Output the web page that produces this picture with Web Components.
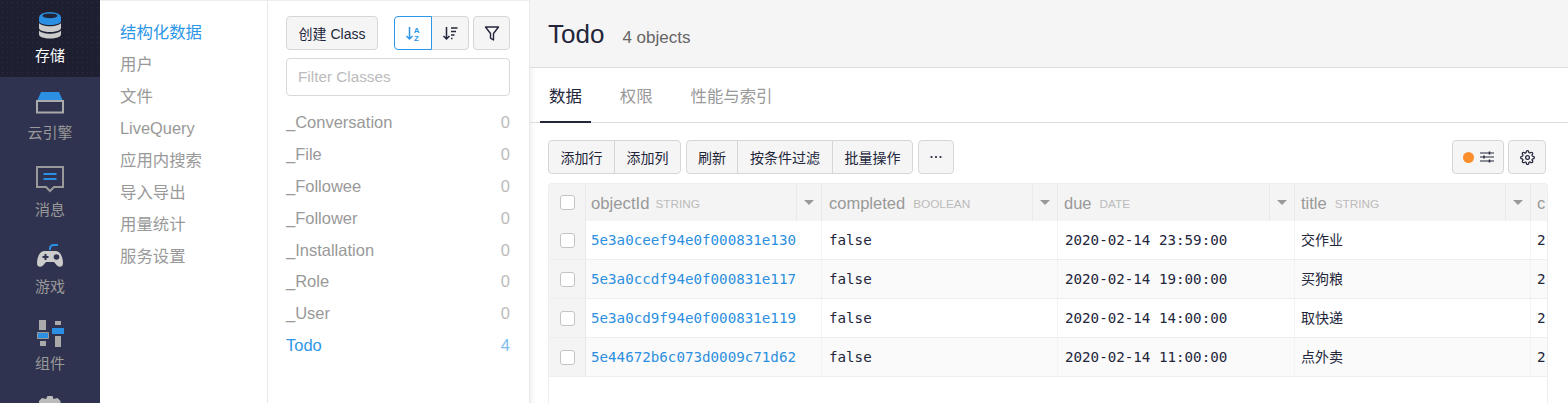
<!DOCTYPE html>
<html lang="zh">
<head>
<meta charset="utf-8">
<title>Todo</title>
<style>
  html, body { margin: 0; height: 100%; overflow: hidden; background: #fff; }
  body { font-family: "Liberation Sans", "Noto Sans CJK SC", sans-serif; color: #23263b; }
  .app { display: flex; height: 403px; overflow: hidden; }
</style>
</head>
<body>
<div class="app">
  <nav-rail>
    <rail-item active label="存储">
      <svg viewBox="0 0 28 28" width="28" height="28">
        <path d="M3 12v5c0 2.400 5 4 11 4s11-1.600 11-4v-5c-1.500 2-6 3.200-11 3.200S4.500 14 3 12z" fill="#ccc"/>
        <path d="M3 19.500v4c0 2.400 5 4 11 4s11-1.600 11-4v-4c-1.500 2-6 3.200-11 3.200S4.500 21.500 3 19.500z" fill="#ccc"/>
        <ellipse cx="14" cy="6.500" rx="11" ry="5.500" fill="#2b8fe3"/>
        <path d="M3 6.500v3.500c0 2.400 5 4 11 4s11-1.600 11-4V6.500c-1.500 2-6 3.200-11 3.200S4.500 8.500 3 6.500z" fill="#2b8fe3"/>
        <ellipse cx="14" cy="4.800" rx="7.500" ry="2.400" fill="#23263b"/>
      </svg>
    </rail-item>
    <rail-item label="云引擎">
      <svg viewBox="0 0 28 28" width="28" height="28">
        <path d="M5 4h18l4 9H1z" fill="#2b8fe3"/>
        <path d="M1 13h26v11.500H1z" fill="none" stroke="#aaa" stroke-width="2"/>
      </svg>
    </rail-item>
    <rail-item label="消息">
      <svg viewBox="0 0 28 28" width="28" height="28">
        <path d="M1 2h26v20h-9l-4 4-4-4H1z" fill="none" stroke="#999" stroke-width="2"/>
        <path d="M7.500 9h13M7.500 14h13" stroke="#2b8fe3" stroke-width="2"/>
      </svg>
    </rail-item>
    <rail-item label="游戏">
      <svg viewBox="0 0 28 28" width="28" height="28">
        <path d="M8 9h12c4.500 0 7 7 7 12 0 4-3.500 5-6 2.500L18 20h-8l-3 3.500C4.500 26 1 25 1 21 1 16 3.500 9 8 9z" fill="#ccc"/>
        <path d="M6.500 15h6M9.500 12v6" stroke="#30334f" stroke-width="2"/>
        <circle cx="20.500" cy="15" r="2.800" fill="#30334f"/>
        <path d="M14 8V6.500C14 4 16 3 18 3h4" fill="none" stroke="#2b8fe3" stroke-width="2"/>
      </svg>
    </rail-item>
    <rail-item label="组件">
      <svg viewBox="0 0 28 28" width="28" height="28">
        <path d="M3 1h7v10H3zM4 22h6v5H4zM19 2h6v4h-6zM19 17h6v11h-6z" fill="#aaa"/>
        <path d="M1.500 13.500h11v6h-11z" fill="#2b8fe3" stroke="#999"/>
        <path d="M16 9h12v6h-12z" fill="#2b8fe3"/>
      </svg>
    </rail-item>
    <rail-item label="">
      <svg viewBox="0 0 28 28" width="28" height="28">
        <path d="M11.500 0h5l1 3 4-1 3 3v23H3V5l3-3 4 1z" fill="#bbb"/>
      </svg>
    </rail-item>
  </nav-rail>

  <sub-nav>
    <a class="on">结构化数据</a><a>用户</a><a>文件</a><a>LiveQuery</a>
    <a>应用内搜索</a><a>导入导出</a><a>用量统计</a><a>服务设置</a>
  </sub-nav>

  <class-panel></class-panel>

  <main-pane>
    <title-bar name="Todo" count="4 objects"></title-bar>
    <tab-bar></tab-bar>
    <grid-toolbar></grid-toolbar>
    <data-grid></data-grid>
  </main-pane>
</div>

<script>
const BTN_CSS = `
  .btn {
    box-sizing: border-box; height: 34px; display: inline-flex; align-items: center; justify-content: center;
    background: #f5f5f5; border: 1px solid #d6d6d6; border-radius: 4px; color: #23263b;
    font: 14px "Liberation Sans", "Noto Sans CJK SC", sans-serif; padding: 0;
  }
  .group { display: inline-flex; }
  .group .btn { border-radius: 0; margin-left: -1px; }
  .group .btn:first-child { border-radius: 4px 0 0 4px; margin-left: 0; }
  .group .btn:last-child { border-radius: 0 4px 4px 0; }
`;

class NavRail extends HTMLElement {
  constructor() {
    super();
    this.attachShadow({ mode: 'open' });
    this.shadowRoot.innerHTML = `
      <style>
        :host { display: block; flex: 0 0 100px; width: 100px; height: 403px; background: #30334f; overflow: hidden; }
      </style>
      <slot></slot>
    `;
  }
}
customElements.define('nav-rail', NavRail);

class RailItem extends HTMLElement {
  constructor() {
    super();
    this.attachShadow({ mode: 'open' });
    this.shadowRoot.innerHTML = `
      <style>
        :host { display: flex; flex-direction: column; align-items: center; height: 77px; box-sizing: border-box; padding-top: 11px; color: #999; font-size: 15px; }
        :host([active]) { background: #1e2032 radial-gradient(#2c2f47 .7px, transparent 1px) 0 0 / 5px 5px; color: #fff; }
        .icon { height: 28px; }
        .label { margin-top: 6px; line-height: 22px; }
      </style>
      <div class="icon"><slot></slot></div>
      <div class="label"></div>
    `;
    this.shadowRoot.querySelector('.label').textContent = this.getAttribute('label');
  }
}
customElements.define('rail-item', RailItem);

class SubNav extends HTMLElement {
  constructor() {
    super();
    this.attachShadow({ mode: 'open' });
    this.shadowRoot.innerHTML = `
      <style>
        :host { display: block; flex: 0 0 147px; padding: 16px 0 0 20px; border-right: 1px solid #e8e8e8; box-shadow: inset 0 1px #eee; }
        ::slotted(a) { display: block; line-height: 32px; height: 32px; font-size: 16.400px; color: #999; }
        ::slotted(a.on) { color: #2c97e8; }
      </style>
      <slot></slot>
    `;
  }
}
customElements.define('sub-nav', SubNav);

class ClassPanel extends HTMLElement {
  constructor() {
    super();
    this.attachShadow({ mode: 'open' });
    const classes = [['_Conversation', 0], ['_File', 0], ['_Followee', 0], ['_Follower', 0], ['_Installation', 0], ['_Role', 0], ['_User', 0], ['Todo', 4]];
    this.shadowRoot.innerHTML = `
      <style>
        ${BTN_CSS}
        :host { display: block; flex: 0 0 224px; padding: 16px 19px 0 18px; box-sizing: content-box; box-shadow: inset 0 1px #eee; }
        .top { display: flex; justify-content: space-between; }
        .right { display: flex; gap: 4px; }
        .create { width: 92px; }
        .sq { width: 38px; }
        .sq.narrow { width: 37px; }
        .btn.active { background: #fff; border-color: #2c97e8; position: relative; z-index: 1; }
        input {
          display: block; box-sizing: border-box; width: 224px; height: 38px; margin-top: 8px; padding: 0 11px;
          border: 1px solid #d9d9d9; border-radius: 4px; font: 15.300px "Liberation Sans", sans-serif; outline: none;
        }
        input::placeholder { color: #bbb; opacity: 1; }
        .list { margin-top: 10px; }
        .row { display: flex; justify-content: space-between; height: 31.900px; line-height: 32px; font-size: 16.500px; color: #999; }
        .row .n { color: #bbb; }
        .row.on { color: #2c97e8; }
        .row.on .n { color: #7cbdf0; }
      </style>
      <div class="top">
        <button class="btn create">创建 Class</button>
        <div class="right">
          <div class="group">
            <button class="btn sq active">
              <svg viewBox="0 0 18 18" width="18" height="18" fill="none" stroke="#2c97e8">
                <path d="M5.500 3v12M2.500 12l3 3 3-3" stroke-width="1.500"/>
                <text x="9.800" y="9" font-size="8" font-weight="700" fill="#2c97e8" stroke="none" font-family="Liberation Sans">A</text>
                <text x="10" y="16.500" font-size="8" font-weight="700" fill="#2c97e8" stroke="none" font-family="Liberation Sans">Z</text>
              </svg>
            </button>
            <button class="btn sq">
              <svg viewBox="0 0 18 18" width="18" height="18" fill="none" stroke="#23263b">
                <path d="M5.500 3v12M2.500 12l3 3 3-3" stroke-width="1.500"/>
                <path d="M10 4h6.500M10 7.500h5M10 11h3.500M10 14.500h1.500" stroke-width="1.400"/>
              </svg>
            </button>
          </div>
          <button class="btn sq narrow">
            <svg viewBox="0 0 18 18" width="18" height="18" fill="none" stroke="#23263b" stroke-width="1.400">
              <path d="M2.500 3h13l-5 6.500V16l-3-1.800V9.500z" stroke-linejoin="round"/>
            </svg>
          </button>
        </div>
      </div>
      <input placeholder="Filter Classes">
      <div class="list">
        ${classes.map(([name, n]) => `<div class="row${name === 'Todo' ? ' on' : ''}"><span>${name}</span><span class="n">${n}</span></div>`).join('')}
      </div>
    `;
  }
}
customElements.define('class-panel', ClassPanel);

class MainPane extends HTMLElement {
  constructor() {
    super();
    this.attachShadow({ mode: 'open' });
    this.shadowRoot.innerHTML = `
      <style>
        :host { display: block; flex: 1; min-width: 0; border-left: 1px solid #eaeaea; box-shadow: inset 5px 0 5px -3px #f0f0f0; }
      </style>
      <slot></slot>
    `;
  }
}
customElements.define('main-pane', MainPane);

class TitleBar extends HTMLElement {
  constructor() {
    super();
    this.attachShadow({ mode: 'open' });
    this.shadowRoot.innerHTML = `
      <style>
        :host { display: flex; align-items: baseline; gap: 18px; box-sizing: border-box; height: 68px; padding: 17px 0 0 18px; background: #f5f5f5; border-bottom: 1px solid #ddd; }
        .name { font-size: 26px; line-height: 34px; color: #23263b; }
        .count { font-size: 17px; color: #666; }
      </style>
      <span class="name"></span><span class="count"></span>
    `;
    this.shadowRoot.querySelector('.name').textContent = this.getAttribute('name');
    this.shadowRoot.querySelector('.count').textContent = this.getAttribute('count');
  }
}
customElements.define('title-bar', TitleBar);

class TabBar extends HTMLElement {
  constructor() {
    super();
    this.attachShadow({ mode: 'open' });
    this.shadowRoot.innerHTML = `
      <style>
        :host { display: flex; gap: 20px; box-sizing: border-box; height: 55px; padding-left: 10px; border-bottom: 1px solid #ddd; font-size: 16.400px; color: #999; }
        .tab { box-sizing: border-box; height: 55px; padding: 0 9px; line-height: 56px; }
        .tab:first-child { width: 49px; padding: 0 0 0 9px; }
        .on { color: #23263b; border-bottom: 2px solid #23263b; }
      </style>
      <div class="tab on">数据</div><div class="tab">权限</div><div class="tab">性能与索引</div>
    `;
  }
}
customElements.define('tab-bar', TabBar);

class GridToolbar extends HTMLElement {
  constructor() {
    super();
    this.attachShadow({ mode: 'open' });
    this.shadowRoot.innerHTML = `
      <style>
        ${BTN_CSS}
        :host { display: flex; gap: 5px; padding: 17px 22px 0 18px; }
        .push { margin-left: auto; display: flex; gap: 4px; }
      </style>
      <div class="group">
        <button class="btn" style="width:67px">添加行</button>
        <button class="btn" style="width:67px">添加列</button>
      </div>
      <div class="group">
        <button class="btn" style="width:52px">刷新</button>
        <button class="btn" style="width:96px">按条件过滤</button>
        <button class="btn" style="width:81px">批量操作</button>
      </div>
      <button class="btn" style="width:36px">
        <svg viewBox="0 0 14 4" width="14" height="4" fill="#23263b"><circle cx="2.500" cy="2" r="1.100"/><circle cx="7" cy="2" r="1.100"/><circle cx="11.500" cy="2" r="1.100"/></svg>
      </button>
      <div class="push">
        <button class="btn" style="width:52px;gap:6px">
          <svg viewBox="0 0 12 12" width="11" height="11"><circle cx="6" cy="6" r="6" fill="#fb8d2b"/></svg>
          <svg viewBox="0 0 14 12" width="14" height="12" fill="none" stroke="#23263b" stroke-width="1.100">
            <path d="M0 2h14M0 6h14M0 10h14"/><path d="M9.500 .5v3M4 4.500v3M9.500 8.500v3" stroke-width="1.500"/>
          </svg>
        </button>
        <button class="btn" style="width:38px">
          <svg viewBox="0 0 24 24" width="15" height="15" fill="none" stroke="#23263b" stroke-width="2" stroke-linecap="round" stroke-linejoin="round">
            <circle cx="12" cy="12" r="3"/>
            <path d="M19.400 15a1.650 1.650 0 0 0 .33 1.820l.06.06a2 2 0 0 1 0 2.830 2 2 0 0 1-2.830 0l-.06-.06a1.650 1.650 0 0 0-1.820-.33 1.650 1.650 0 0 0-1 1.510V21a2 2 0 0 1-2 2 2 2 0 0 1-2-2v-.09A1.650 1.650 0 0 0 9 19.400a1.650 1.650 0 0 0-1.820.33l-.06.06a2 2 0 0 1-2.830 0 2 2 0 0 1 0-2.830l.06-.06a1.650 1.650 0 0 0 .33-1.820 1.650 1.650 0 0 0-1.510-1H3a2 2 0 0 1-2-2 2 2 0 0 1 2-2h.09A1.650 1.650 0 0 0 4.600 9a1.650 1.650 0 0 0-.33-1.820l-.06-.06a2 2 0 0 1 0-2.830 2 2 0 0 1 2.830 0l.06.06a1.650 1.650 0 0 0 1.820.33H9a1.650 1.650 0 0 0 1-1.510V3a2 2 0 0 1 2-2 2 2 0 0 1 2 2v.09a1.650 1.650 0 0 0 1 1.510 1.650 1.650 0 0 0 1.820-.33l.06-.06a2 2 0 0 1 2.830 0 2 2 0 0 1 0 2.830l-.06.06a1.650 1.650 0 0 0-.33 1.820V9a1.650 1.650 0 0 0 1.510 1H21a2 2 0 0 1 2 2 2 2 0 0 1-2 2h-.09a1.650 1.650 0 0 0-1.510 1z"/>
          </svg>
        </button>
      </div>
    `;
  }
}
customElements.define('grid-toolbar', GridToolbar);

class DataGrid extends HTMLElement {
  constructor() {
    super();
    this.attachShadow({ mode: 'open' });
    const cols = [['objectId', 'STRING'], ['completed', 'BOOLEAN'], ['due', 'DATE'], ['title', 'STRING']];
    const rows = [
      ['5e3a0ceef94e0f000831e130', 'false', '2020-02-14 23:59:00', '交作业'],
      ['5e3a0ccdf94e0f000831e117', 'false', '2020-02-14 19:00:00', '买狗粮'],
      ['5e3a0cd9f94e0f000831e119', 'false', '2020-02-14 14:00:00', '取快递'],
      ['5e44672b6c073d0009c71d62', 'false', '2020-02-14 11:00:00', '点外卖'],
    ];
    const head = cols.map(([name, type], i) => `
      <div class="th c${i}"><span class="nm">${name}</span><span class="ty">${type}</span><span class="drop"><i></i></span></div>`).join('');
    const body = rows.map((r, i) => `
      <div class="row${i % 2 ? ' alt' : ''}">
        <div class="chk"><b></b></div>
        <div class="td link">${r[0]}</div><div class="td bool">${r[1]}</div><div class="td date">${r[2]}</div><div class="td cjk">${r[3]}</div>
        <div class="td last">2</div>
      </div>`).join('');
    this.shadowRoot.innerHTML = `
      <style>
        :host { display: block; margin: 9px 20px 0 18px; height: 220px; border: 1px solid #eee; border-bottom: 0; border-radius: 4px 4px 0 0; overflow: hidden; }
        .row, .head { display: grid; grid-template-columns: 37px 236px 236px 237px 236px 18px; }
        .head { height: 37px; background: #f4f4f4; }
        .row { height: 39px; box-sizing: border-box; border-bottom: 1px solid #eee; background: #fff; }
        .row.alt { background: #fafafa; }
        .chk { display: flex; align-items: center; justify-content: center; background: #f4f4f4; border-right: 1px solid #e8e8e8; }
        .chk b { box-sizing: border-box; width: 15px; height: 15px; background: #fff; border: 1px solid #c4c4c4; border-radius: 3px; }
        .th { display: flex; align-items: center; padding: 2px 0 0 6px; box-sizing: border-box; border-right: 1px solid #e8e8e8; overflow: hidden; white-space: nowrap; }
        .th.c0 { padding-left: 5px; }
        .th.c1 { padding-left: 7px; }
        .nm { font-size: 16.500px; color: #999; }
        .c0 .nm { font-size: 16.700px; }
        .ty { font-size: 11.800px; color: #bbb; margin: 1px 0 0 8px; }
        .c0 .ty { margin-left: 6px; }
        .drop { margin: -2px 0 0 auto; flex: 0 0 24px; align-self: stretch; display: flex; align-items: center; justify-content: center; border-left: 1px solid #eaeaea; }
        .drop i { width: 0; height: 0; border: 5px solid transparent; border-top: 5px solid #999; border-bottom: 0; }
        .td { padding-left: 6px; font: 14.200px/38px "DejaVu Sans Mono", "Noto Sans CJK SC", monospace; color: #23263b; border-right: 1px solid #f3f3f3; white-space: nowrap; overflow: hidden; }
        .link { color: #2c8fdf; padding-left: 5px; }
        .bool, .date { padding-left: 7px; }
        .last { border: 0; }
        .cjk { font: 14px/36px "Noto Sans CJK SC", sans-serif; }
      </style>
      <div class="head">
        <div class="chk"><b></b></div>
        ${head}
        <div class="th"><span class="nm">c</span></div>
      </div>
      ${body}
    `;
  }
}
customElements.define('data-grid', DataGrid);
</script>
</body>
</html>
